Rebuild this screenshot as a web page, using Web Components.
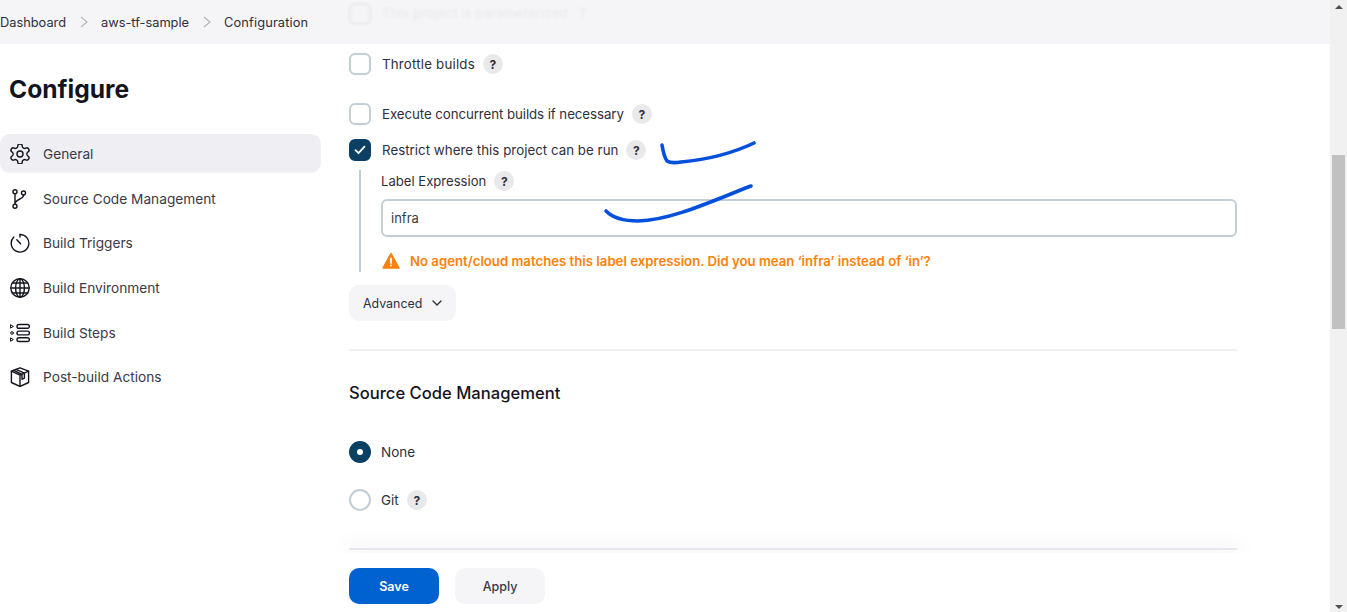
<!DOCTYPE html>
<html lang="en">
<head>
<meta charset="utf-8">
<title>Configure</title>
<style>
html,body{margin:0;height:612px;overflow:hidden;background:#fff;}
body{font-family:Inter,"Noto Sans",sans-serif;font-size:13.3px;color:#2f2f3b;}
</style>
</head>
<body>
<jk-app>
  <jk-breadcrumb slot="top">
    <a>Dashboard</a><a>aws-tf-sample</a><a>Configuration</a>
  </jk-breadcrumb>
  <jk-sidebar slot="side">
    <jk-nav-item icon="gear" active>General</jk-nav-item>
    <jk-nav-item icon="branch">Source Code Management</jk-nav-item>
    <jk-nav-item icon="timer">Build Triggers</jk-nav-item>
    <jk-nav-item icon="globe">Build Environment</jk-nav-item>
    <jk-nav-item icon="steps">Build Steps</jk-nav-item>
    <jk-nav-item icon="box">Post-build Actions</jk-nav-item>
  </jk-sidebar>
  <jk-form slot="form"></jk-form>
  <jk-actions slot="bottom"></jk-actions>
</jk-app>

<script>
//Iconos de la barra lateral
const ICONS = {
  gear: '<path d="M12.22 2h-.44a2 2 0 0 0-2 2v.18a2 2 0 0 1-1 1.73l-.43.25a2 2 0 0 1-2 0l-.15-.08a2 2 0 0 0-2.73.73l-.22.38a2 2 0 0 0 .73 2.73l.15.1a2 2 0 0 1 1 1.72v.51a2 2 0 0 1-1 1.74l-.15.09a2 2 0 0 0-.73 2.73l.22.38a2 2 0 0 0 2.73.73l.15-.08a2 2 0 0 1 2 0l.43.25a2 2 0 0 1 1 1.73V20a2 2 0 0 0 2 2h.44a2 2 0 0 0 2-2v-.18a2 2 0 0 1 1-1.73l.43-.25a2 2 0 0 1 2 0l.15.08a2 2 0 0 0 2.73-.73l.22-.39a2 2 0 0 0-.73-2.73l-.15-.08a2 2 0 0 1-1-1.74v-.5a2 2 0 0 1 1-1.74l.15-.09a2 2 0 0 0 .73-2.73l-.22-.38a2 2 0 0 0-2.73-.73l-.15.08a2 2 0 0 1-2 0l-.43-.25a2 2 0 0 1-1-1.73V4a2 2 0 0 0-2-2z"/><circle cx="12" cy="12" r="3"/>',
  branch: '<circle cx="7" cy="4.800" r="2"/><circle cx="7" cy="19.200" r="2"/><circle cx="15.500" cy="6" r="2"/><path d="M7 6.800v10.400M15.500 8c0 5-8.500 3.500-8.500 9.200"/>',
  timer: '<path d="M12 3.500a8.800 8.800 0 1 1-6.200 2.600"/><path d="M12 3.500v2.600M8.800 8.800l3.800 4"/>',
  globe: '<circle cx="12" cy="12" r="9.200"/><ellipse cx="12" cy="12" rx="4.400" ry="9.200"/><path d="M12 2.800v18.400M2.800 12h18.400M4.200 7h15.600M4.200 17h15.600"/>',
  steps: '<rect x="9" y="3.500" width="12.400" height="3.800" rx="1.900"/><rect x="9" y="10.100" width="12.400" height="3.800" rx="1.900"/><rect x="9" y="16.700" width="12.400" height="3.800" rx="1.900"/><g stroke-width="1"><path d="M2.800 3.900l2.600 1.500-2.600 1.500zM2.800 17.100l2.600 1.500-2.600 1.500z"/><circle cx="4" cy="12" r="1.300"/></g>',
  box: '<path d="M12 2.800l8.600 3.400v11.300L12 21.500l-8.600-4V6.200z"/><path d="M3.400 6.200l8.600 4 8.600-4M12 10.200v11.300M8 4.400l8.400 3.800v5l-2.400 1.100v-5L5.800 5.300"/>'
};

class JkApp extends HTMLElement{
  constructor(){
    super();
    this.attachShadow({mode:'open'});
    this.shadowRoot.innerHTML = `
      <style>
        :host{display:flex;height:612px;width:1347px;position:relative;}
        .main{flex:1;min-width:0;display:flex;flex-direction:column;}
        .top{height:44px;flex:none;}
        .middle{flex:1;min-height:0;display:grid;grid-template-columns:349px 888px;}
        .bottom{height:59px;flex:none;}
        .bar{width:17px;flex:none;background:#f1f1f1;display:flex;flex-direction:column;align-items:center;justify-content:space-between;padding:5px 0 3px;box-sizing:border-box;}
        .track{flex:1;width:13px;padding-top:146px;box-sizing:border-box;}
        .thumb{height:174px;background:#c1c1c1;}
        .up{width:0;height:0;border:4px solid transparent;border-top:0;border-bottom:4px solid #505050;}
        .down{width:0;height:0;border:4px solid transparent;border-bottom:0;border-top:4px solid #505050;}
        svg.ink{position:absolute;left:0;top:0;pointer-events:none;}
      </style>
      <div class="main">
        <div class="top"><slot name="top"></slot></div>
        <div class="middle"><slot name="side"></slot><slot name="form"></slot></div>
        <div class="bottom"><slot name="bottom"></slot></div>
      </div>
      <div class="bar"><div class="up"></div><div class="track"><div class="thumb"></div></div><div class="down"></div></div>
      <svg class="ink" width="1347" height="612" fill="none" stroke="#0050dc" stroke-width="3.600" stroke-linecap="round" stroke-linejoin="round">
        <path d="M662 145c1 6 2 12 5 16c3 2 8 2 14 1c22-2 50-8 73-19"/>
        <path d="M606 211c6 6 16 10 32 10c34-1 74-20 113-35"/>
      </svg>`;
  }
}

class JkBreadcrumb extends HTMLElement{
  constructor(){
    super();
    this.attachShadow({mode:'open'});
    this.shadowRoot.innerHTML = `
      <style>
        :host{display:grid;grid-template-columns:349px 1fr;height:44px;background:#f5f5f7;overflow:hidden;}
        .crumbs{display:flex;align-items:center;height:44px;font-size:12.800px;}
        .item{white-space:nowrap;color:#2f2f3b;}
        .item:last-child{letter-spacing:.15px;}
        .sep{width:35px;display:flex;justify-content:center;flex:none;}
        .ghost{display:flex;align-items:flex-start;gap:11px;filter:blur(1.400px);opacity:.07;padding-top:3px;font-size:13.500px;}
        .ghost i{display:block;width:18px;height:18px;border:2px solid #2f2f3b;border-radius:6px;}
        .ghost span{padding-top:2px;}
      </style>
      <div class="crumbs"></div>
      <div class="ghost"><i></i><span>This project is parameterized &nbsp; ?</span></div>`;
  }
  connectedCallback(){
    //Pasamos los enlaces a la sombra con su separador
    const box = this.shadowRoot.querySelector('.crumbs');
    const links = [...this.querySelectorAll('a')];
    links.forEach((a, i) => {
      const s = document.createElement('span');
      s.className = 'item';
      s.textContent = a.textContent;
      box.appendChild(s);
      if(i < links.length - 1){
        const sep = document.createElement('span');
        sep.className = 'sep';
        sep.innerHTML = '<svg width="8" height="12" viewBox="0 0 8 12" fill="none" stroke="#b4b6bd" stroke-width="1.200"><path d="M1 1l6 5-6 5"/></svg>';
        box.appendChild(sep);
      }
    });
  }
}

class JkSidebar extends HTMLElement{
  constructor(){
    super();
    this.attachShadow({mode:'open'});
    this.shadowRoot.innerHTML = `
      <style>
        :host{display:block;}
        h1{margin:0;padding:28px 0 0 9px;height:62px;box-sizing:border-box;font-size:24.600px;line-height:35px;font-weight:700;color:#14141f;}
        nav{display:flex;flex-direction:column;width:321px;padding-top:28px;}
      </style>
      <h1>Configure</h1>
      <nav><slot></slot></nav>`;
  }
}

class JkNavItem extends HTMLElement{
  constructor(){
    super();
    this.attachShadow({mode:'open'});
    const icon = ICONS[this.getAttribute('icon')] || '';
    this.shadowRoot.innerHTML = `
      <style>
        :host{display:flex;align-items:center;gap:13px;height:39px;margin-bottom:5.600px;padding-left:10px;border-radius:10px;color:#3a3a46;font-size:13.700px;}
        :host([active]){background:#eeeef3;margin-bottom:6.400px;}
        svg{width:20px;height:20px;flex:none;}
      </style>
      <svg viewBox="2 2 20 20" fill="none" stroke="#14141f" stroke-width="1.400" stroke-linecap="round" stroke-linejoin="round">${icon}</svg>
      <slot></slot>`;
  }
}

class JkHelp extends HTMLElement{
  constructor(){
    super();
    this.attachShadow({mode:'open'});
    this.shadowRoot.innerHTML = `
      <style>
        :host{display:inline-flex;align-items:center;justify-content:center;width:20px;height:20px;flex:none;border-radius:50%;background:#e9e9eb;font-size:12px;font-weight:700;color:#2f2f3b;letter-spacing:0;}
      </style>?`;
  }
}

class JkCheck extends HTMLElement{
  constructor(){
    super();
    this.attachShadow({mode:'open'});
    this.shadowRoot.innerHTML = `
      <style>
        :host{display:flex;align-items:center;height:22px;}
        .box{width:22px;height:22px;box-sizing:border-box;border:2px solid #c3ced4;border-radius:6px;flex:none;display:flex;align-items:center;justify-content:center;margin-right:11px;}
        :host([checked]) .box{background:#0b4063;border-color:#0b4063;}
        :host([radio]) .box{border-radius:50%;margin-right:10px;}
        .dot{width:6px;height:6px;background:#fff;border-radius:50%;display:none;}
        :host([radio][checked]) .dot{display:block;}
        svg{display:none;}
        :host([checked]:not([radio])) svg{display:block;}
        .help{margin-left:8px;display:none;}
        :host([help]) .help{display:inline-flex;}
      </style>
      <span class="box"><i class="dot"></i><svg width="12" height="10" viewBox="0 0 12 10" fill="none" stroke="#fff" stroke-width="1.800" stroke-linecap="round" stroke-linejoin="round"><path d="M1.500 5.200l3 3 6-6.500"/></svg></span>
      <slot></slot><jk-help class="help"></jk-help>`;
  }
}

class JkForm extends HTMLElement{
  constructor(){
    super();
    this.attachShadow({mode:'open'});
    this.shadowRoot.innerHTML = `
      <style>
        :host{display:block;position:relative;}
        .wrap{display:flex;flex-direction:column;height:509px;overflow:hidden;}
        .throttle{margin-top:9px;letter-spacing:.2px;}
        .exec{margin-top:28px;letter-spacing:-.08px;}
        .restrict{margin-top:14px;letter-spacing:.03px;}
        .nested{margin:9px 0 0 10px;border-left:2px solid #c3ced4;padding-left:20px;height:102px;box-sizing:border-box;display:flex;flex-direction:column;}
        .label{display:flex;align-items:center;gap:8px;height:20px;margin-top:1px;font-size:13.100px;}
        .input{margin-top:8px;height:38px;box-sizing:border-box;border:2px solid #c3ced4;border-radius:6px;padding-left:8px;display:flex;align-items:center;width:856px;color:#3a3a46;font-size:13px;}
        .warn{display:flex;align-items:center;gap:10px;margin:14px 0 0 1px;color:#fe820a;font-weight:600;font-size:13.200px;height:20px;}
        .adv{margin-top:13px;align-self:flex-start;width:107px;height:36px;box-sizing:border-box;padding-left:14px;gap:9px;display:flex;align-items:center;background:#f5f5f7;border-radius:10px;font-size:12.400px;}
        hr{border:0;height:2px;background:#f0f0f3;margin:28px 0 0;flex:none;}
        h2{margin:30px 0 0;font-size:16.600px;line-height:24px;font-weight:500;color:#14141f;}
        .none{margin-top:36px;font-size:13.500px;}
        .git{margin-top:26px;font-size:13.500px;}
        .last{margin-top:37px;background:#ebebf0;}
      </style>
      <div class="wrap">
        <jk-check class="throttle" help>Throttle builds</jk-check>
        <jk-check class="exec" help>Execute concurrent builds if necessary</jk-check>
        <jk-check class="restrict" help checked>Restrict where this project can be run</jk-check>
        <div class="nested">
          <div class="label">Label Expression <jk-help></jk-help></div>
          <div class="input">infra</div>
          <div class="warn">
            <svg width="18" height="18" viewBox="0 0 18 18"><path d="M9 1.500L17 16H1z" fill="#fe820a" stroke="#fe820a" stroke-width="1.500" stroke-linejoin="round"/><path d="M9 6.500v4.500" stroke="#fff" stroke-width="1.800" stroke-linecap="round"/><circle cx="9" cy="13.400" r="1" fill="#fff"/></svg>
            <span>No agent/cloud matches this label expression. Did you mean ‘infra’ instead of ‘in’?</span>
          </div>
        </div>
        <div class="adv">Advanced <svg width="12" height="8" viewBox="0 0 12 8" fill="none" stroke="#2f2f3b" stroke-width="1.400" stroke-linecap="round" stroke-linejoin="round"><path d="M2 2l4 4 4-4"/></svg></div>
        <hr>
        <h2>Source Code Management</h2>
        <jk-check class="none" radio checked>None</jk-check>
        <jk-check class="git" radio help>Git</jk-check>
        <hr class="last">
      </div>`;
  }
}

class JkActions extends HTMLElement{
  constructor(){
    super();
    this.attachShadow({mode:'open'});
    this.shadowRoot.innerHTML = `
      <style>
        :host{display:flex;gap:16px;height:59px;box-sizing:border-box;padding:15px 0 0 349px;background:#fff;position:relative;}
        /* la sombra que sube sobre el formulario */
        :host::before{content:"";position:absolute;left:349px;width:888px;top:0;height:0;box-shadow:0 -2px 22px 4px rgba(40,40,70,.07);clip-path:inset(-50px -50px 0 -50px);pointer-events:none;}
        button{all:unset;width:90px;height:36px;border-radius:10px;text-align:center;font-size:12.500px;line-height:38px;}
        .save{background:#0062d1;color:#fff;font-weight:600;}
        .apply{background:#f5f5f7;color:#3a3a46;font-weight:500;}
      </style>
      <button class="save">Save</button><button class="apply">Apply</button>`;
  }
}

customElements.define('jk-app', JkApp);
customElements.define('jk-breadcrumb', JkBreadcrumb);
customElements.define('jk-sidebar', JkSidebar);
customElements.define('jk-nav-item', JkNavItem);
customElements.define('jk-help', JkHelp);
customElements.define('jk-check', JkCheck);
customElements.define('jk-form', JkForm);
customElements.define('jk-actions', JkActions);
</script>
</body>
</html>
